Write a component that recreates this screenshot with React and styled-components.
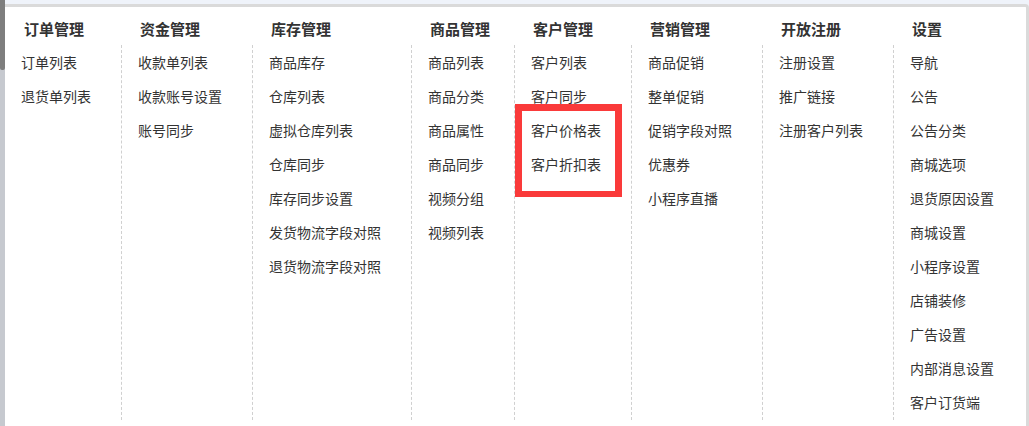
import React from 'react';
import styled, { createGlobalStyle } from 'styled-components';

const menu = [
  { title: '订单管理', items: ['订单列表', '退货单列表'] },
  { title: '资金管理', items: ['收款单列表', '收款账号设置', '账号同步'] },
  {
    title: '库存管理',
    items: ['商品库存', '仓库列表', '虚拟仓库列表', '仓库同步', '库存同步设置', '发货物流字段对照', '退货物流字段对照'],
  },
  { title: '商品管理', items: ['商品列表', '商品分类', '商品属性', '商品同步', '视频分组', '视频列表'] },
  { title: '客户管理', items: ['客户列表', '客户同步', '客户价格表', '客户折扣表'], marked: true },
  { title: '营销管理', items: ['商品促销', '整单促销', '促销字段对照', '优惠券', '小程序直播'] },
  { title: '开放注册', items: ['注册设置', '推广链接', '注册客户列表'] },
  {
    title: '设置',
    items: ['导航', '公告', '公告分类', '商城选项', '退货原因设置', '商城设置', '小程序设置', '店铺装修', '广告设置', '内部消息设置', '客户订货端'],
  },
];

const App = () => {
  return (
    <>
      <GlobalStyle />
      <Page>
        <Scrollbar>
          <Thumb />
        </Scrollbar>
        <Panel>
          {menu.map((group, i) => (
            <Column key={group.title}>
              <Heading>{group.title}</Heading>
              <List first={i === 0}>
                {group.items.map((item) => (
                  <Item key={item}>{item}</Item>
                ))}
                {group.marked && <Marker />}
              </List>
            </Column>
          ))}
        </Panel>
      </Page>
    </>
  );
};

export default App;

const GlobalStyle = createGlobalStyle`
  html, body {
    margin: 0;
    padding: 0;
    height: 426px;
    overflow: hidden;
    background: #eff3fa;
    font-family: "Noto Sans CJK SC", "Noto Sans", sans-serif;
  }
`;

const Page = styled.div`
  display: flex;
  align-items: flex-start;
  height: 426px;
`;

const Scrollbar = styled.div`
  align-self: stretch;
  width: 5px;
  flex-shrink: 0;
  background: #c6c9cf;
`;

const Thumb = styled.div`
  height: 70px;
  background: #7e7e7e;
  border-radius: 0 0 2px 2px;
`;

const Panel = styled.div`
  flex: 1;
  display: flex;
  height: 419px;
  margin-top: 4px;
  background: #fff;
  border-top: 3px solid #dadada;
  border-right: 3px solid #dadada;
  border-top-right-radius: 4px;
`;

const Column = styled.div`
  display: flex;
  flex-direction: column;
  padding-bottom: 6px;
`;

const Heading = styled.h3`
  margin: 0;
  padding: 6px 0 0 19px;
  height: 32px;
  line-height: 32px;
  font-size: 15px;
  font-weight: bold;
  color: #333;
  white-space: nowrap;
`;

const List = styled.ul`
  flex: 1;
  position: relative;
  list-style: none;
  margin: 0;
  padding: 0 30px 0 16px;
  border-left: ${({ first }) => (first ? 'none' : '1px dashed #d0d0d0')};
`;

const Item = styled.li`
  height: 34px;
  line-height: 34px;
  font-size: 14px;
  color: #333;
  white-space: nowrap;
`;

const Marker = styled.div`
  position: absolute;
  top: 59px;
  left: 0;
  width: 93px;
  height: 80px;
  border: 7px solid #fa3a3a;
  border-bottom-width: 6px;
`;
